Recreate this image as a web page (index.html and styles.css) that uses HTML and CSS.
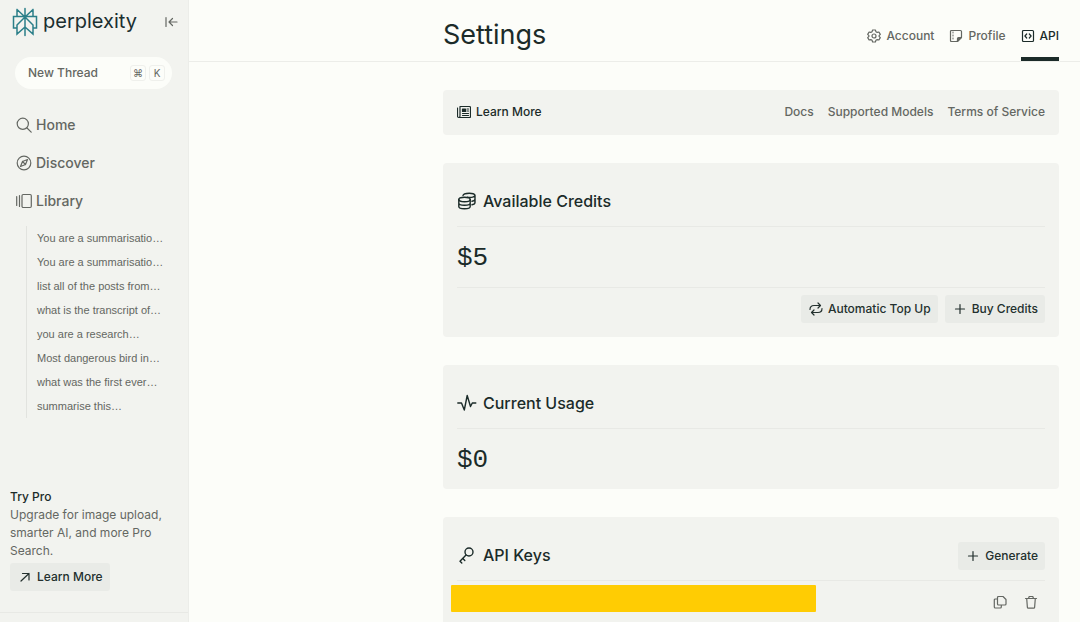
FILE: index.html
```html
<!DOCTYPE html>
<html lang="en">
<head>
<meta charset="utf-8">
<meta name="viewport" content="width=device-width, initial-scale=1">
<title>Settings - Perplexity</title>
<link rel="stylesheet" href="styles.css">
</head>
<body>
<div class="app">
  <aside class="sidebar">
    <div class="brand-row">
      <a class="brand" href="#">
        <svg class="brand-mark" viewBox="0 0 26 30" aria-hidden="true"><path d="M13 1.500v27M5 2.500l8 7.500M21 2.500L13 10M5 2.500V9.500M21 2.500V9.500M5 21H1.500V9.500h23V21H21M13 10l-8 8v9l8-7M13 10l8 8v9l-8-7"/></svg>
        <span>perplexity</span>
      </a>
      <button class="icon-button" type="button" aria-label="Collapse sidebar">
        <svg class="icon-s" viewBox="0 0 14 14"><path d="M2 2.500v9M13 7H5M8.500 3.500L5 7l3.500 3.500"/></svg>
      </button>
    </div>
    <button class="new-thread" type="button"><span>New Thread</span><kbd>⌘</kbd><kbd>K</kbd></button>
    <nav class="side-nav">
      <a href="#"><svg viewBox="0 0 16 16"><circle cx="6.800" cy="6.800" r="5.600"/><path d="M11 11l4.200 4.200"/></svg>Home</a>
      <a href="#"><svg viewBox="0 0 16 16"><circle cx="8" cy="8" r="6.800"/><path d="M11.500 4.500L9.500 9.500 4.500 11.500 6.500 6.500zM6.500 6.500l3 3"/></svg>Discover</a>
      <a href="#"><svg viewBox="0 0 16 16"><rect x="6" y="1.500" width="9.300" height="13" rx="1.200"/><path d="M3.500 2.500v11M.7 3.500v9"/></svg>Library</a>
    </nav>
    <ul class="threads">
      <li><a href="#">You are a summarisatio…</a></li>
      <li><a href="#">You are a summarisatio…</a></li>
      <li><a href="#">list all of the posts from…</a></li>
      <li><a href="#">what is the transcript of…</a></li>
      <li><a href="#">you are a research…</a></li>
      <li><a href="#">Most dangerous bird in…</a></li>
      <li><a href="#">what was the first ever…</a></li>
      <li><a href="#">summarise this…</a></li>
    </ul>
    <section class="promo">
      <h2>Try Pro</h2>
      <p>Upgrade for image upload, smarter AI, and more Pro Search.</p>
      <button class="button" type="button"><svg class="icon-s" viewBox="0 0 14 14"><path d="M3 11l8-7.500M4.500 3.500H11V10"/></svg>Learn More</button>
    </section>
    <div class="sidebar-foot"></div>
  </aside>
  <main class="main">
    <header class="header">
      <h1>Settings</h1>
      <nav class="tabs">
        <a href="#"><svg class="icon-s" viewBox="0 0 14 14"><path d="M5.600 1h2.800l.5 1.700 1.300.7 1.700-.4 1.400 2.400L12.100 6.600v.8l1.200 1.200-1.400 2.400-1.700-.4-1.300.7-.5 1.700H5.600l-.5-1.700-1.300-.7-1.700.4L.7 8.600l1.200-1.200v-.8L.7 5.400 2.100 3l1.700.4 1.300-.7z"/><circle cx="7" cy="7" r="2"/></svg>Account</a>
        <a href="#"><svg class="icon-s" viewBox="0 0 14 14"><path d="M2.500 1.500h9q1 0 1 1V8l-4.500 4.500H2.500q-1 0-1-1v-9q0-1 1-1z"/><path class="solid" d="M12.500 8.500h-3q-1 0-1 1v3z"/><path class="dotted" d="M4 3v8"/></svg>Profile</a>
        <a class="current" href="#" aria-current="page"><svg class="icon-s" viewBox="0 0 14 14"><rect x="1.500" y="1.500" width="11" height="11" rx="1"/><path d="M5.700 5L3.900 7l1.800 2M8.300 5l1.800 2-1.800 2"/></svg>API</a>
      </nav>
    </header>
    <div class="content">
      <section class="card links">
        <strong><svg class="icon-s" viewBox="0 0 14 14"><path d="M3.500 1.500h9q1 0 1 1v9q0 1-1 1H2q-1.500 0-1.500-1.500V3M3 1.500V11q0 1.500-1.300 1.500M5.500 8.500h6M5.500 10.500h6M10 4h1.500M10 6h1.500"/><path class="solid" d="M5.500 4h3v2.500h-3z"/></svg>Learn More</strong>
        <a href="#">Docs</a><a href="#">Supported Models</a><a href="#">Terms of Service</a>
      </section>
      <section class="card">
        <div class="card-head"><h2><svg class="icon-l" viewBox="0 0 20 20"><ellipse cx="7.500" cy="8.500" rx="5.700" ry="2.200"/><path d="M1.800 8.500v7c0 3 11.400 3 11.400 0v-7M1.800 12c0 3 11.400 3 11.400 0M6 4.500C6.500 1.500 18 1.500 18 4.300v7.200c0 1.300-1.500 2-3 2.300M10.500 6.200c4 .6 7.500-.3 7.500-1.900M18 8c0 1.300-1.500 2-3 2.300"/></svg>Available Credits</h2></div>
        <div class="value">$5</div>
        <div class="actions">
          <button class="button" type="button"><svg class="icon-s" viewBox="0 0 14 14"><path d="M1 7.500Q1 3.500 5 3.500h6M9 1l2.500 2.500L9 6M13 6.500q0 4-4 4H3M5 8l-2.500 2.500L5 13"/></svg>Automatic Top Up</button>
          <button class="button" type="button"><svg class="icon-s" viewBox="0 0 14 14"><path d="M7 2.500v9M2.500 7h9"/></svg>Buy Credits</button>
        </div>
      </section>
      <section class="card">
        <div class="card-head"><h2><svg class="icon-l" viewBox="0 0 20 20"><path d="M.8 10h3.700l2.800 7L10.200 2.500l3.300 11 1.800-3.500h3.500"/></svg>Current Usage</h2></div>
        <div class="value">$0</div>
      </section>
      <section class="card">
        <div class="card-head"><h2><svg class="icon-l" viewBox="0 0 20 20"><circle cx="12" cy="7" r="4"/><path d="M9 10l-6 6.200 1.800 1.800M5.800 13.500l2 2"/></svg>API Keys</h2>
          <button class="button" type="button"><svg class="icon-s" viewBox="0 0 14 14"><path d="M7 2.500v9M2.500 7h9"/></svg>Generate</button></div>
        <div class="key-row">
          <div class="key-mask"></div>
          <div class="key-tools">
            <button class="icon-button" type="button" aria-label="Copy key"><svg class="icon-s" viewBox="0 0 14 14"><path d="M5.500 1.500H10l3 3V9q0 1-1 1H5.500q-1 0-1-1V2.500q0-1 1-1zM4.500 4H2.300Q1.300 4 1.300 5v7q0 1 1 1h5q1 0 1-1v-2"/></svg></button>
            <button class="icon-button" type="button" aria-label="Delete key"><svg class="icon-s" viewBox="0 0 14 14"><path d="M1.500 3.500h11M4.500 3.500l.7-2h3.600l.7 2M2.700 3.500l.7 9q.1.700.8.700h5.600q.7 0 .8-.7l.7-9"/></svg></button>
          </div>
        </div>
      </section>
    </div>
  </main>
</div>
</body>
</html>
```

FILE: styles.css
```css
* { box-sizing: border-box; }
body { margin: 0; background: #fcfdf9; color: #646762; font: 500 12px/18px Inter, "Liberation Sans", sans-serif; }
h1, h2, p, ul { margin: 0; padding: 0; }
a { color: inherit; text-decoration: none; }
button { font: inherit; color: inherit; border: 0; background: none; padding: 0; cursor: pointer; }
svg { flex: none; fill: none; stroke: currentColor; stroke-width: 1.2; stroke-linejoin: round; stroke-linecap: round; }
.icon-s { width: 14px; height: 14px; }
.icon-l { width: 20px; height: 20px; stroke-width: 1.4; }
.solid { fill: currentColor; }
.dotted { stroke-dasharray: 1 2; stroke-width: 1; }
.icon-button { display: flex; }

.app { display: flex; height: 100vh; overflow: hidden; }
.sidebar { width: 189px; flex: none; display: flex; flex-direction: column; background: #f2f3ef; border-right: 1px solid #ecede9; }
.brand-row { display: flex; align-items: center; justify-content: space-between; padding: 7px 10px 0 12px; }
.brand { display: flex; align-items: center; gap: 5px; color: #1b2f30; font-size: 20px; line-height: 28px; font-weight: 400; }
.brand span { padding-bottom: 2px; }
.brand-mark { width: 26px; height: 30px; stroke: #2b7f89; stroke-width: 1.5; stroke-linejoin: miter; }
.new-thread { display: flex; align-items: center; gap: 3px; height: 32px; margin: 20px 16px 0 15px; padding: 0 7px 0 13px; border-radius: 16px; background: #fcfdf9; }
.new-thread span { flex: 1; text-align: left; }
kbd { width: 16px; height: 16px; border: 1px solid #eff0ec; border-radius: 3px; font: 10px/14px Inter, "DejaVu Sans", sans-serif; text-align: center; }
.side-nav { display: flex; flex-direction: column; padding: 17px 16px 0; }
.side-nav a { display: flex; align-items: center; gap: 4px; font-size: 14px; line-height: 20px; padding: 9px 0; }
.side-nav svg { width: 16px; height: 16px; }
.threads { list-style: none; margin: 6px 16px 0 26px; padding-left: 10px; border-left: 1px solid #e2e3df; font: 11px "Liberation Sans", sans-serif; }
.threads a { display: block; line-height: 24px; white-space: nowrap; }
.promo { margin-top: auto; padding: 0 10px 21px; font-weight: 400; }
.promo h2 { font-size: 12px; line-height: 18px; font-weight: 500; color: #1b2b29; }
.promo p { margin-bottom: 3px; }
.sidebar-foot { height: 10px; border-top: 1px solid #e8e9e5; }

.button { display: inline-flex; align-items: center; gap: 5px; height: 28px; padding: 0 7px 0 8px; border-radius: 3px; background: #e9ebe7; color: #23302e; font-weight: 500; white-space: nowrap; }

.main { flex: 1; min-width: 0; overflow: hidden; }
.header { display: flex; align-items: stretch; justify-content: space-between; height: 62px; padding: 0 21px 0 254px; border-bottom: 1px solid #ecede9; }
h1 { font-size: 27px; line-height: 36px; padding-top: 17px; font-weight: 400; color: #1b2b29; }
.tabs { display: flex; gap: 15px; }
.tabs a { display: flex; align-items: center; gap: 5px; padding-top: 14px; border-bottom: 4px solid transparent; }
.tabs .current { color: #1b2b29; border-color: #1b2b29; }
.content { display: flex; flex-direction: column; gap: 28px; padding: 28px 21px 28px 254px; }
.card { background: #f2f3ef; border-radius: 4px; padding: 14px 14px 0; }
.links { display: flex; align-items: center; gap: 14px; padding: 13px 14px 14px; }
.links strong { display: flex; align-items: center; gap: 5px; margin-right: auto; font-weight: 500; color: #1b2b29; }
.card-head { display: flex; align-items: center; justify-content: space-between; height: 50px; border-bottom: 1px solid #e8e9e5; }
.card-head h2 { display: flex; align-items: center; gap: 6px; padding-bottom: 2px; color: #1b2b29; font-size: 16px; line-height: 24px; font-weight: 500; }
.value { height: 60px; padding-top: 1px; color: #1b2b29; font: 26px/60px "Liberation Mono", monospace; }
.actions { display: flex; justify-content: flex-end; gap: 7px; padding: 7px 0 14px; border-top: 1px solid #e8e9e5; }
.key-row { display: flex; justify-content: space-between; padding: 4px 0 14px; }
.key-mask { width: 62%; height: 27px; margin-left: -6px; border-radius: 1px; background: #ffcc03; }
.key-tools { display: flex; align-items: flex-end; gap: 17px; padding-right: 7px; height: 24px; }
```
